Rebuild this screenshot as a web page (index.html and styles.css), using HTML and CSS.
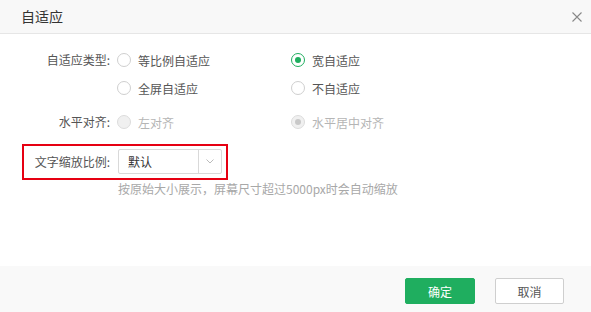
FILE: index.html
```html
<!DOCTYPE html>
<html lang="zh-CN">
<head>
<meta charset="utf-8">
<title>自适应</title>
<link rel="stylesheet" href="styles.css">
</head>
<body>
<div class="dialog">
  <div class="dialog-header">
    <span class="dialog-title">自适应</span>
    <svg class="close" width="10" height="10" viewBox="0 0 10 10"><path d="M0.5 0.5L9.5 9.5M9.5 0.5L0.5 9.5" stroke="#888" stroke-width="1.1" fill="none"/></svg>
  </div>
  <div class="dialog-body">
    <div class="group">
      <div class="label">自适应类型:</div>
      <div class="options">
        <label class="option"><span class="radio"></span><span>等比例自适应</span></label>
        <label class="option"><span class="radio checked"></span><span>宽自适应</span></label>
        <label class="option"><span class="radio"></span><span>全屏自适应</span></label>
        <label class="option"><span class="radio"></span><span>不自适应</span></label>
      </div>
    </div>
    <div class="group group-align">
      <div class="label">水平对齐:</div>
      <div class="options">
        <label class="option disabled"><span class="radio"></span><span>左对齐</span></label>
        <label class="option disabled"><span class="radio checked"></span><span>水平居中对齐</span></label>
      </div>
    </div>
    <div class="scale-row">
      <div class="label scale-label">文字缩放比例:</div>
      <div class="select">
        <span class="select-value">默认</span>
        <span class="select-arrow"><svg width="8" height="5" viewBox="0 0 8 5"><path d="M0.5 0.5L4 4L7.5 0.5" stroke="#bbb" stroke-width="1" fill="none"/></svg></span>
      </div>
    </div>
    <div class="hint">按原始大小展示，屏幕尺寸超过5000px时会自动缩放</div>
  </div>
  <div class="dialog-footer">
    <button class="btn btn-primary">确定</button>
    <button class="btn btn-default">取消</button>
  </div>
</div>
</body>
</html>
```
FILE: styles.css
```css
* { box-sizing: border-box; }
html, body {
  margin: 0;
  padding: 0;
  background: #fff;
}
body {
  font-family: "Noto Sans CJK SC", "Liberation Sans", sans-serif;
  font-size: 12px;
  color: #555;
}
.dialog {
  width: 591px;
  height: 312px;
  display: flex;
  flex-direction: column;
}
.dialog-header {
  height: 34px;
  background: #f8f8f8;
  border-bottom: 1px solid #e6e6e6;
  display: flex;
  align-items: center;
  justify-content: space-between;
  padding: 0 9px 2px 21px;
}
.dialog-title {
  font-size: 14px;
  color: #333;
  line-height: 20px;
}
.close { display: block; margin-top: 2px; }
.dialog-body {
  flex: 1;
  padding-top: 12px;
}
.group {
  display: flex;
}
.label {
  width: 110px;
  text-align: right;
  line-height: 28px;
  color: #555;
  flex: none;
}
.options {
  display: grid;
  grid-template-columns: 174px 174px;
  margin-left: 7px;
}
.option {
  display: flex;
  align-items: center;
  height: 28px;
  gap: 7px;
  color: #555;
}
.radio {
  width: 14px;
  height: 14px;
  border-radius: 50%;
  border: 1px solid #cfcfcf;
  background: #fff;
  flex: none;
  display: flex;
  align-items: center;
  justify-content: center;
}
.radio.checked {
  border-color: #1fae5f;
  border-width: 1.5px;
}
.radio.checked::after {
  content: "";
  width: 6px;
  height: 6px;
  border-radius: 50%;
  background: #1fae5f;
}
.group-align { margin-top: 6px; }
.option.disabled { color: #b5b5b5; }
.option.disabled .radio {
  background: #f0f0f0;
  border: 1px solid #dcdcdc;
}
.option.disabled .radio.checked::after { background: #c8c8c8; }
.scale-row {
  display: flex;
  align-items: center;
  width: fit-content;
  margin: 8px 0 0 22px;
  border: 2px solid #e60012;
  padding: 3px 4px 4px 0;
}
.scale-label {
  width: 86px;
  line-height: 25px;
}
.select {
  margin-left: 8px;
  width: 104px;
  height: 25px;
  border: 1px solid #d9d9d9;
  border-radius: 2px;
  display: flex;
  align-items: stretch;
}
.select-value {
  flex: 1;
  padding-left: 9px;
  line-height: 23px;
  color: #333;
}
.select-arrow {
  width: 23px;
  border-left: 1px solid #d9d9d9;
  display: flex;
  align-items: center;
  justify-content: center;
}
.select-arrow svg { display: block; }
.hint {
  margin: 0 0 0 118px;
  line-height: 18px;
  color: #a8a8a8;
}
.dialog-footer {
  height: 46px;
  background: #f9f9f9;
  display: flex;
  justify-content: flex-end;
  align-items: flex-start;
  padding: 12px 27px 0 0;
  gap: 20px;
}
.btn {
  height: 26px;
  border-radius: 2px;
  font-family: inherit;
  font-size: 12px;
  padding: 0;
  cursor: pointer;
}
.btn-primary {
  width: 70px;
  background: #1fae5f;
  border: 1px solid #1fae5f;
  color: #fff;
}
.btn-default {
  width: 69px;
  background: #fff;
  border: 1px solid #cfcfcf;
  color: #555;
}
```
